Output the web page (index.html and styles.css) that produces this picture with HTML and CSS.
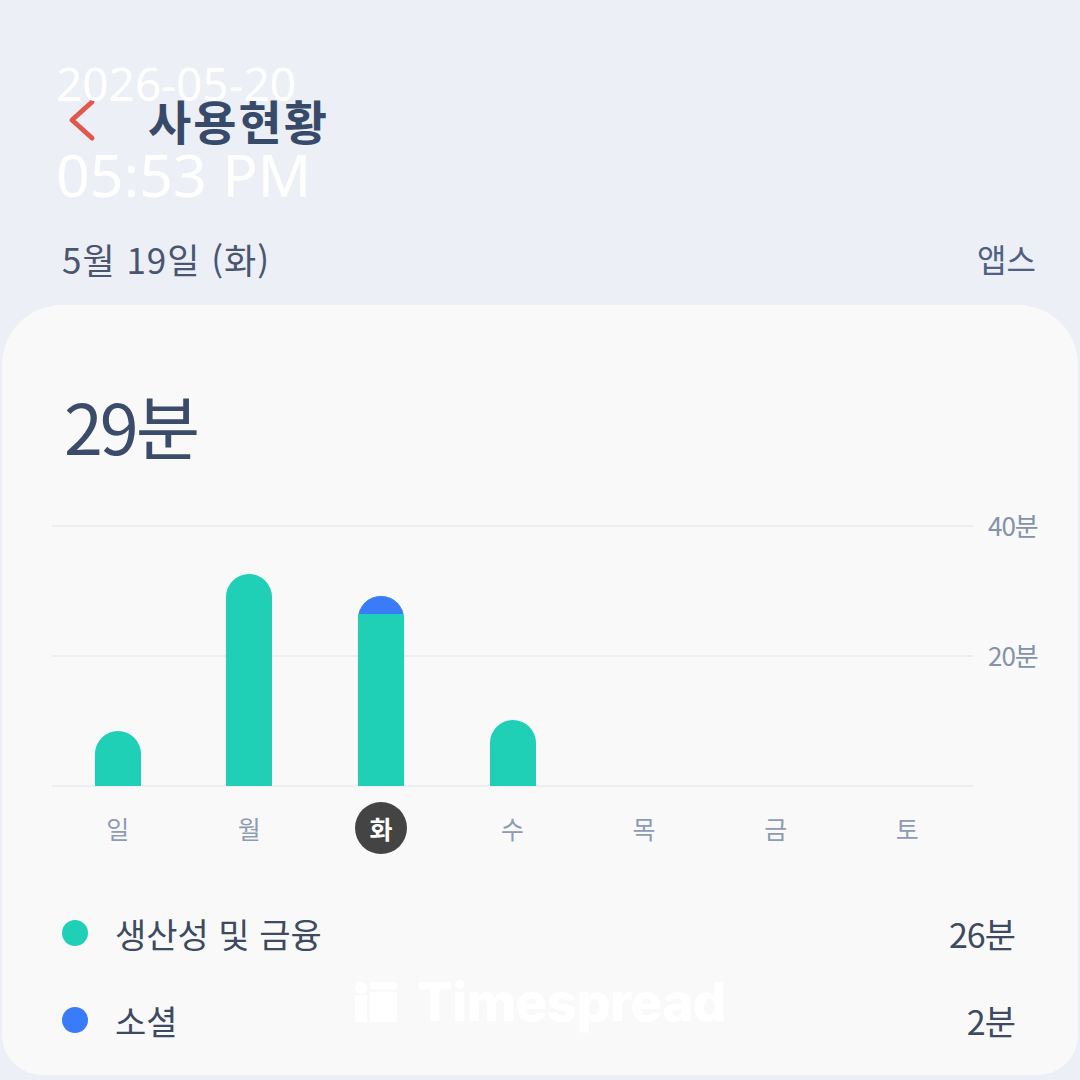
FILE: index.html
```html
<!DOCTYPE html>
<html lang="ko">
	<head>
		<meta charset="UTF-8" />
		<meta name="viewport" content="width=device-width, initial-scale=1.0" />
		<title>사용현황</title>
		<link rel="stylesheet" href="styles.css">
	</head>
	<body>
		<div class="pantalla">
			<div class="title-row">
				<svg class="back" width="34" height="44" viewBox="0 0 34 44">
					<path d="M26 4 L6 22 L26 40" fill="none" stroke="#e0584e" stroke-width="5" stroke-linecap="round" stroke-linejoin="round" />
				</svg>
				<h1 class="titulo">사용현황</h1>
			</div>

			<div class="date-row">
				<span>5월 19일 (화)</span>
				<span class="apps">앱스</span>
			</div>

			<div class="card">
				<div class="total">29분</div>

				<div class="chart">
					<div class="grid-line l40"><span class="axis">40분</span></div>
					<div class="grid-line l20"><span class="axis">20분</span></div>
					<div class="grid-line l0"></div>
					<div class="bars">
						<div class="col"><div class="bar" style="height: 55px"></div></div>
						<div class="col"><div class="bar" style="height: 212px"></div></div>
						<div class="col">
							<div class="bar stack" style="height: 190px">
								<div class="seg blue" style="height: 18px"></div>
								<div class="seg teal"></div>
							</div>
						</div>
						<div class="col"><div class="bar" style="height: 66px"></div></div>
						<div class="col"></div>
						<div class="col"></div>
						<div class="col"></div>
					</div>
				</div>

				<div class="days">
					<div class="day">일</div>
					<div class="day">월</div>
					<div class="day"><span class="sel">화</span></div>
					<div class="day">수</div>
					<div class="day">목</div>
					<div class="day">금</div>
					<div class="day">토</div>
				</div>

				<div class="legend">
					<div class="leg-row">
						<span class="dot teal"></span>
						<span class="leg-name">생산성 및 금융</span>
						<span class="leg-val">26분</span>
					</div>
					<div class="leg-row">
						<span class="dot blue"></span>
						<span class="leg-name">소셜</span>
						<span class="leg-val">2분</span>
					</div>
				</div>

				<div class="marca">
					<svg width="42" height="40" viewBox="0 0 42 40">
						<circle cx="6" cy="6" r="6" fill="#fff" />
						<rect x="0" y="13" width="12" height="27" fill="#fff" />
						<rect x="15" y="0" width="27" height="7" fill="#fff" />
						<rect x="15" y="10" width="27" height="30" fill="#fff" />
					</svg>
					<span>Timespread</span>
				</div>
			</div>

			<div class="stamp">
				<div class="fecha">2026-05-20</div>
				<div class="hora">05:53 PM</div>
			</div>
		</div>
	</body>
</html>
```

FILE: styles.css
```css
body {
	margin: 0;
	padding: 0;
	background-color: #eceff5;
	font-family: "Noto Sans CJK KR", "Noto Sans", sans-serif;
}
.pantalla {
	position: relative;
	width: 1080px;
	height: 1080px;
	overflow: hidden;
}
.title-row {
	display: flex;
	align-items: center;
	height: 60px;
	padding-top: 90px;
	padding-left: 66px;
}
.back {
	display: block;
}
.titulo {
	margin: 0 0 0 48px;
	font-size: 47px;
	font-weight: 700;
	color: #374a6a;
	line-height: 60px;
	letter-spacing: 2px;
}
.date-row {
	display: flex;
	justify-content: space-between;
	align-items: center;
	height: 40px;
	margin-top: 88px;
	padding: 0 44px 0 62px;
	font-size: 35px;
	color: #4a5670;
	letter-spacing: 1px;
}
.apps {
	color: #4f6084;
	font-size: 32px;
	letter-spacing: 0;
}
.card {
	position: relative;
	margin: 27px 2px 0;
	height: 770px;
	background-color: #f9f9fa;
	border-radius: 60px 60px 40px 40px;
}
.total {
	padding: 80px 0 0 62px;
	height: 80px;
	line-height: 80px;
	font-size: 70px;
	color: #3b4c6b;
	letter-spacing: -3px;
}
.chart {
	position: relative;
	margin: 61px 0 0 50px;
	width: 921px;
	height: 260px;
}
.grid-line {
	position: absolute;
	left: 0;
	width: 921px;
	height: 2px;
	background-color: #eceef2;
}
.l40 { top: -1px; }
.l20 { top: 129px; }
.l0 { top: 259px; }
.axis {
	position: absolute;
	left: 936px;
	top: -17px;
	font-size: 26px;
	line-height: 34px;
	color: #8592ad;
	letter-spacing: -1px;
	white-space: nowrap;
}
.bars {
	display: flex;
	align-items: flex-end;
	height: 260px;
}
.col {
	flex: 1;
	display: flex;
	justify-content: center;
	align-items: flex-end;
	height: 260px;
}
.bar {
	position: relative;
	width: 46px;
	background-color: #1fcfb6;
	border-radius: 23px 23px 0 0;
	overflow: hidden;
}
.stack {
	display: flex;
	flex-direction: column;
}
.seg.blue {
	background-color: #3a7bfa;
}
.seg.teal {
	flex: 1;
	background-color: #1fcfb6;
}
.days {
	display: flex;
	margin: 16px 0 0 50px;
	width: 921px;
	height: 52px;
}
.day {
	flex: 1;
	display: flex;
	justify-content: center;
	align-items: center;
	font-size: 25px;
	color: #8e9bb5;
}
.sel {
	display: flex;
	justify-content: center;
	align-items: center;
	width: 52px;
	height: 52px;
	border-radius: 50%;
	background-color: #444;
	color: #fff;
	font-weight: 700;
}
.legend {
	display: flex;
	flex-direction: column;
	gap: 27px;
	margin-top: 49px;
	padding: 0 63px 0 60px;
}
.leg-row {
	display: flex;
	align-items: center;
	height: 60px;
	font-size: 34px;
	color: #3d4a62;
}
.dot {
	width: 26px;
	height: 26px;
	border-radius: 50%;
	margin-right: 27px;
}
.dot.teal { background-color: #1fcfb6; }
.dot.blue { background-color: #3a7bfa; }
.leg-name {
	flex: 1;
}
.leg-val {
	letter-spacing: -1px;
}
.marca {
	position: absolute;
	left: 353px;
	top: 677px;
	display: flex;
	align-items: flex-end;
	gap: 20px;
	color: #fff;
	font-family: Inter, sans-serif;
	font-weight: 800;
	font-size: 53px;
	line-height: 40px;
	letter-spacing: -0.5px;
}
.stamp {
	position: absolute;
	left: 56px;
	top: 60px;
	color: #fff;
	font-family: "Noto Sans", sans-serif;
}
.fecha {
	font-size: 46px;
	line-height: 46px;
}
.hora {
	margin-top: 39px;
	font-size: 59px;
	line-height: 59px;
}
```
